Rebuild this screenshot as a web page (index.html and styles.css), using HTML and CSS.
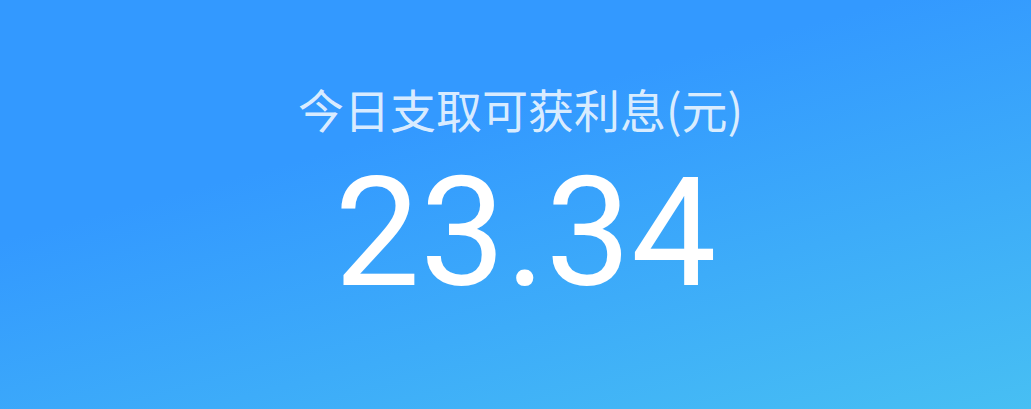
FILE: index.html
```html
<!DOCTYPE html>
<html lang="zh">
<head>
<meta charset="utf-8">
<link rel="stylesheet" href="styles.css">
</head>
<body>
<div class="card">
  <div class="title">今日支取可获利息(元)</div>
  <div class="amount">23.34</div>
</div>
</body>
</html>
```

FILE: styles.css
```css
html, body {
  margin: 0;
  padding: 0;
}
body {
  width: 1031px;
  height: 409px;
  overflow: hidden;
}
.card {
  box-sizing: border-box;
  width: 1031px;
  height: 409px;
  background: linear-gradient(165deg, #3399ff 0%, #3399ff 35%, #47bff3 100%);
  display: flex;
  flex-direction: column;
  align-items: center;
  padding-top: 78px;
  padding-left: 10px;
}
.title {
  font-family: "Noto Sans CJK SC", "Noto Sans", sans-serif;
  font-size: 46px;
  line-height: 60px;
  color: rgba(255, 255, 255, 0.84);
}
.amount {
  margin-top: 20px;
  margin-left: 10px;
  font-family: Roboto, "Liberation Sans", sans-serif;
  font-weight: 400;
  font-size: 152px;
  line-height: 150px;
  color: #ffffff;
}
```
